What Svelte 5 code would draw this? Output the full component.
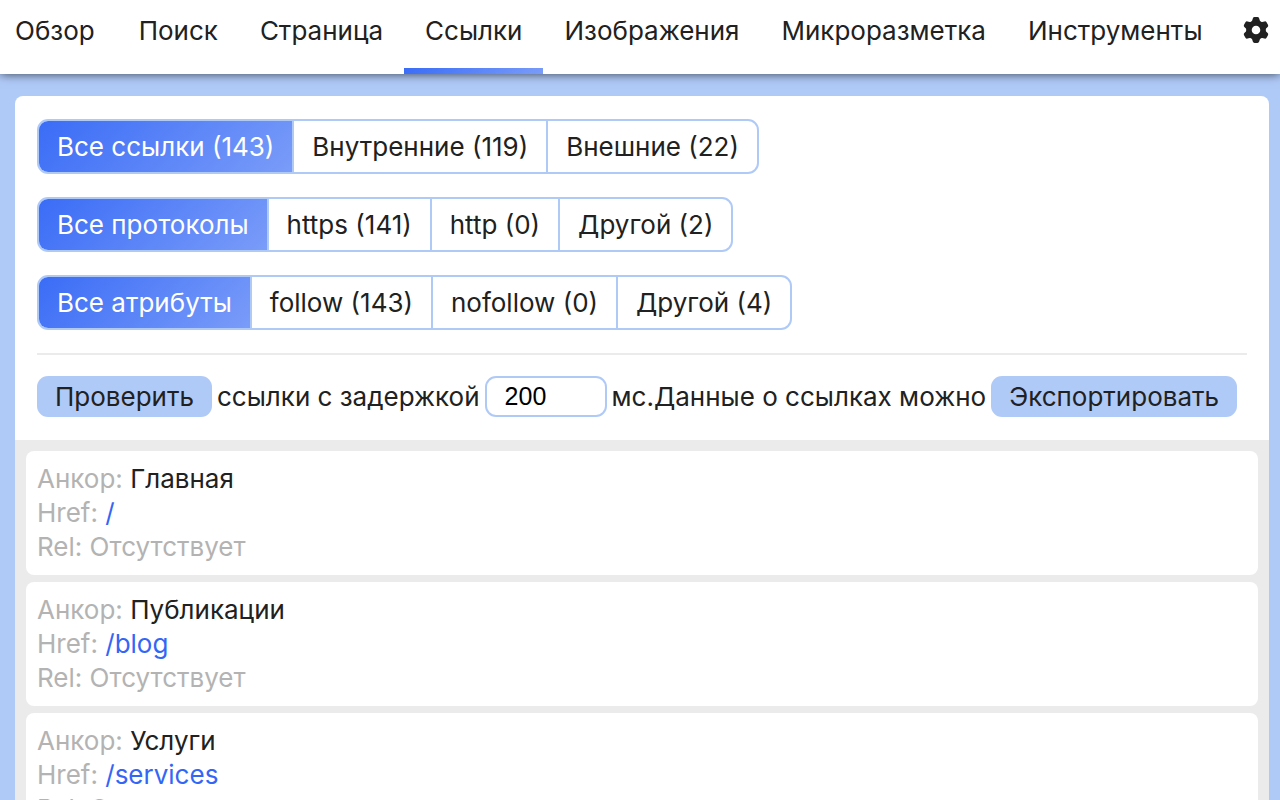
<script lang="ts">
  interface LinkItem {
    anchor: string;
    href: string;
    rel: string;
  }

  interface Filter {
    name: string;
    options: string[];
  }

  const tabs = ['Обзор', 'Поиск', 'Страница', 'Ссылки', 'Изображения', 'Микроразметка', 'Инструменты'];

  const filters: Filter[] = [
    { name: 'Ссылки', options: ['Все ссылки (143)', 'Внутренние (119)', 'Внешние (22)'] },
    { name: 'Протоколы', options: ['Все протоколы', 'https (141)', 'http (0)', 'Другой (2)'] },
    { name: 'Атрибуты', options: ['Все атрибуты', 'follow (143)', 'nofollow (0)', 'Другой (4)'] }
  ];

  const links: LinkItem[] = [
    { anchor: 'Главная', href: '/', rel: 'Отсутствует' },
    { anchor: 'Публикации', href: '/blog', rel: 'Отсутствует' },
    { anchor: 'Услуги', href: '/services', rel: 'Отсутствует' }
  ];

  // Angles of the gear teeth
  const teeth = [0, 60, 120, 180, 240, 300];

  let activeTab = $state('Ссылки');
  let selected = $state([0, 0, 0]);
  let delay = $state(200);
</script>

<div class="page">
  <header>
    <nav>
      {#each tabs as tab}
        <button class="tab" class:active={activeTab === tab} onclick={() => (activeTab = tab)}>{tab}</button>
      {/each}
    </nav>
    <button class="settings" aria-label="Настройки">
      <svg viewBox="-13 -13 26 26" width="26" height="26">
        <circle r="7" fill="none" stroke="currentColor" stroke-width="5.4" />
        {#each teeth as angle}
          <path
            d="M-4.8 -8 L-3.8 -9.4 L-3.2 -11.6 Q-2.8 -13 -1.4 -13 H1.4 Q2.8 -13 3.2 -11.6 L3.8 -9.4 L4.8 -8 Z"
            fill="currentColor"
            transform="rotate({angle})"
          />
        {/each}
      </svg>
    </button>
  </header>

  <main>
    <section class="controls">
      {#each filters as filter, i}
        <div class="group" role="group" aria-label={filter.name}>
          {#each filter.options as option, j}
            <button class:active={selected[i] === j} onclick={() => (selected[i] = j)}>{option}</button>
          {/each}
        </div>
      {/each}

      <div class="actions">
        <button class="action">Проверить</button>
        <label for="delay">ссылки с задержкой</label>
        <input id="delay" type="number" bind:value={delay} />
        <span>мс.Данные о ссылках можно</span>
        <button class="action">Экспортировать</button>
      </div>
    </section>

    <section class="list">
      {#each links as link}
        <article class="card">
          <div>Анкор: <span class="anchor">{link.anchor}</span></div>
          <div>Href: <a href={link.href}>{link.href}</a></div>
          <div>Rel: {link.rel}</div>
        </article>
      {/each}
    </section>
  </main>
</div>

<style>
  :global(body) {
    margin: 0;
    background: #b0caf8;
  }

  .page {
    font-family: Inter, 'Liberation Sans', sans-serif;
    font-size: 26px;
    line-height: 34px;
    color: #212121;
  }

  button,
  input {
    font: inherit;
    color: inherit;
    margin: 0;
    box-sizing: border-box;
  }

  button {
    border: none;
    background: none;
    cursor: pointer;
    white-space: nowrap;
  }

  header {
    display: flex;
    justify-content: space-between;
    position: relative;
    height: 74px;
    background: #fff;
    box-shadow: 0 0 10px rgba(0, 0, 0, 0.7);
  }

  nav {
    display: flex;
  }

  .tab {
    display: flex;
    flex-direction: column;
    justify-content: space-between;
    padding: 14px 21px 0;
  }

  .tab:first-child {
    padding: 14px 23px 0 15px;
  }

  .tab::after {
    content: '';
    align-self: stretch;
    height: 6px;
    margin: 0 -21px;
  }

  .tab.active::after {
    background: linear-gradient(135deg, #3a6cf6, #7a9cf9);
  }

  .settings {
    display: flex;
    padding: 17px 11px 0 0;
  }

  main {
    margin: 22px 11px 0 15px;
    background: #fff;
    border-radius: 8px 8px 0 0;
  }

  .controls {
    display: flex;
    flex-direction: column;
    align-items: flex-start;
    gap: 23px;
    padding: 23px 22px;
  }

  .group {
    display: flex;
    border: 2px solid #b0caf8;
    border-radius: 11px;
    overflow: hidden;
  }

  .group button {
    height: 51px;
    padding: 0 18px;
  }

  .group button + button {
    border-left: 2px solid #b0caf8;
  }

  .group button.active {
    color: #fff;
    background: linear-gradient(135deg, #3a6cf6, #7a9cf9);
  }

  .actions {
    display: flex;
    align-items: center;
    align-self: stretch;
    gap: 5px;
    padding-top: 21px;
    border-top: 2px solid #ebebeb;
    white-space: nowrap;
  }

  .action {
    height: 41px;
    padding: 0 18px;
    border-radius: 11px;
    background: #b0caf8;
  }

  input {
    width: 122px;
    height: 41px;
    padding: 0 18px;
    border: 2px solid #b0caf8;
    border-radius: 11px;
    background: #fff;
    color: #000;
    font-family: 'Liberation Sans', sans-serif;
    font-size: 25px;
    appearance: textfield;
  }

  .list {
    display: flex;
    flex-direction: column;
    gap: 7px;
    padding: 11px;
    background: #ebebeb;
  }

  .card {
    padding: 11px;
    border-radius: 8px;
    background: #fff;
    color: #b3b3b3;
  }

  .anchor {
    color: #212121;
  }

  a {
    color: #3366f6;
    text-decoration: none;
  }
</style>
